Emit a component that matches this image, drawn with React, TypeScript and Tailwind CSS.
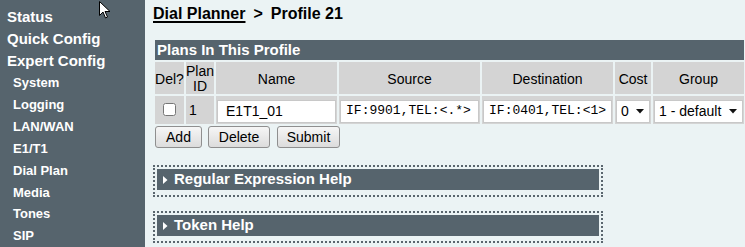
import { useState } from "react";

const mainNav = ["Status", "Quick Config", "Expert Config"];
const subNav = [
  "System",
  "Logging",
  "LAN/WAN",
  "E1/T1",
  "Dial Plan",
  "Media",
  "Tones",
  "SIP",
];

const mono = { fontFamily: '"Liberation Mono", "Courier New", monospace' };

function Caret() {
  return (
    <svg width="8" height="5" viewBox="0 0 8 5" className="shrink-0">
      <path d="M0 0h8L4 4.5z" fill="#111" />
    </svg>
  );
}

function HelpBox({ title, className }: { title: string; className: string }) {
  return (
    <div
      className={`w-[450px] border-2 border-dotted border-[#5a666e] px-[2px] pb-[5px] pt-[2px] ${className}`}
    >
      <div className="flex h-[21px] items-center gap-[6px] bg-[#56646d] pl-[6px] text-[15px] font-bold text-white">
        <svg width="5" height="8" viewBox="0 0 5 8">
          <path d="M0 0l4.5 4L0 8z" fill="#fff" />
        </svg>
        {title}
      </div>
    </div>
  );
}

export default function App() {
  const [checked, setChecked] = useState(false);

  return (
    <div
      className="relative flex h-[247px] w-[745px] overflow-hidden bg-[#ebf3f4] text-black"
      style={{ fontFamily: '"Liberation Sans", Arial, sans-serif' }}
    >
      {/* sidebar */}
      <div className="flex w-[145px] shrink-0 flex-col bg-[#56646d] pt-[6px] font-bold text-white">
        {mainNav.map((item) => (
          <div key={item} className="flex h-[22px] items-center pl-[7px] text-[15px]">
            {item}
          </div>
        ))}
        {subNav.map((item) => (
          <div key={item} className="flex h-[22px] items-center pl-[13px] text-[13px]">
            {item}
          </div>
        ))}
      </div>

      {/* mouse pointer */}
      <svg
        className="absolute left-[99px] top-[1px]"
        width="12"
        height="18"
        viewBox="0 0 12 18"
      >
        <path
          d="M0.5 0.5v14l3.5-3.5 2.5 6 2-1-2.5-5.5h5z"
          fill="#fff"
          stroke="#000"
          strokeWidth="1"
        />
      </svg>

      {/* main */}
      <div className="flex flex-col pl-[8px] pt-[3px]">
        <div className="flex h-[22px] items-center gap-[8px] text-[16px] font-bold">
          <span className="underline decoration-2 underline-offset-2">Dial Planner</span>
          <span>&gt;</span>
          <span>Profile 21</span>
        </div>

        <div className="ml-[2px] mt-[15px] w-[589px]">
          <div className="flex h-[20px] items-center bg-[#56646d] pl-[2px] text-[15px] font-bold text-white">
            Plans In This Profile
          </div>
          <table
            className="-mx-[2px] border-separate border-spacing-[2px] text-[14px]"
            style={{ width: 593 }}
          >
            <thead>
              <tr className="h-[30px] bg-[#d4d4d4] text-center leading-[15px]">
                <th className="w-[29px] p-0 pt-[2px] font-normal">Del?</th>
                <th className="w-[27px] p-0 pt-[2px] font-normal">
                  Plan
                  <br />
                  ID
                </th>
                <th className="w-[121px] p-0 pt-[2px] font-normal">Name</th>
                <th className="w-[141px] p-0 pt-[2px] font-normal">Source</th>
                <th className="w-[131px] p-0 pt-[2px] font-normal">Destination</th>
                <th className="w-[36px] p-0 pt-[2px] font-normal">Cost</th>
                <th className="p-0 pt-[2px] font-normal">Group</th>
              </tr>
            </thead>
            <tbody>
              <tr className="h-[28px] bg-[#d4d4d4]">
                <td className="p-0 text-center">
                  <input
                    type="checkbox"
                    checked={checked}
                    onChange={() => setChecked(!checked)}
                    className="h-[13px] w-[13px] translate-y-[1px]"
                  />
                </td>
                <td className="p-0 pl-[3px] pt-[1px]">1</td>
                <td className="p-0">
                  <div className="mx-[1px] mt-[2px] flex h-[23px] items-center border border-[#c8c8c8] bg-white pl-[8px] text-[14px]">
                    E1T1_01
                  </div>
                </td>
                <td className="p-0">
                  <div
                    className="mx-[1px] mt-[2px] flex h-[23px] items-center overflow-hidden whitespace-nowrap border border-[#c8c8c8] bg-white pl-[5px] text-[13px]"
                    style={mono}
                  >
                    IF:9901,TEL:&lt;.*&gt;
                  </div>
                </td>
                <td className="p-0">
                  <div
                    className="mx-[1px] mt-[2px] flex h-[23px] items-center overflow-hidden whitespace-nowrap border border-[#c8c8c8] bg-white pl-[5px] text-[13px]"
                    style={mono}
                  >
                    IF:0401,TEL:&lt;1&gt;
                  </div>
                </td>
                <td className="p-0">
                  <div className="mx-[1px] mt-[2px] flex h-[23px] items-center justify-between border border-[#c8c8c8] bg-white pl-[4px] pr-[5px] text-[14px]">
                    0
                    <Caret />
                  </div>
                </td>
                <td className="p-0">
                  <div className="mx-[1px] mt-[2px] flex h-[23px] items-center justify-between border border-[#c8c8c8] bg-white pl-[4px] pr-[5px] text-[14px]">
                    1 - default
                    <Caret />
                  </div>
                </td>
              </tr>
            </tbody>
          </table>
          <div className="flex text-[14px]">
            <button className="h-[22px] w-[47px] rounded-[3px] border border-[#8f8f8f] bg-gradient-to-b from-[#f6f6f6] to-[#dcdcdc] leading-none">
              Add
            </button>
            <button className="ml-[6px] h-[22px] w-[62px] rounded-[3px] border border-[#8f8f8f] bg-gradient-to-b from-[#f6f6f6] to-[#dcdcdc] leading-none">
              Delete
            </button>
            <button className="ml-[7px] h-[22px] w-[63px] rounded-[3px] border border-[#8f8f8f] bg-gradient-to-b from-[#f6f6f6] to-[#dcdcdc] leading-none">
              Submit
            </button>
          </div>
        </div>

        <HelpBox title="Regular Expression Help" className="mt-[17px]" />
        <HelpBox title="Token Help" className="mt-[14px]" />
      </div>
    </div>
  );
}
